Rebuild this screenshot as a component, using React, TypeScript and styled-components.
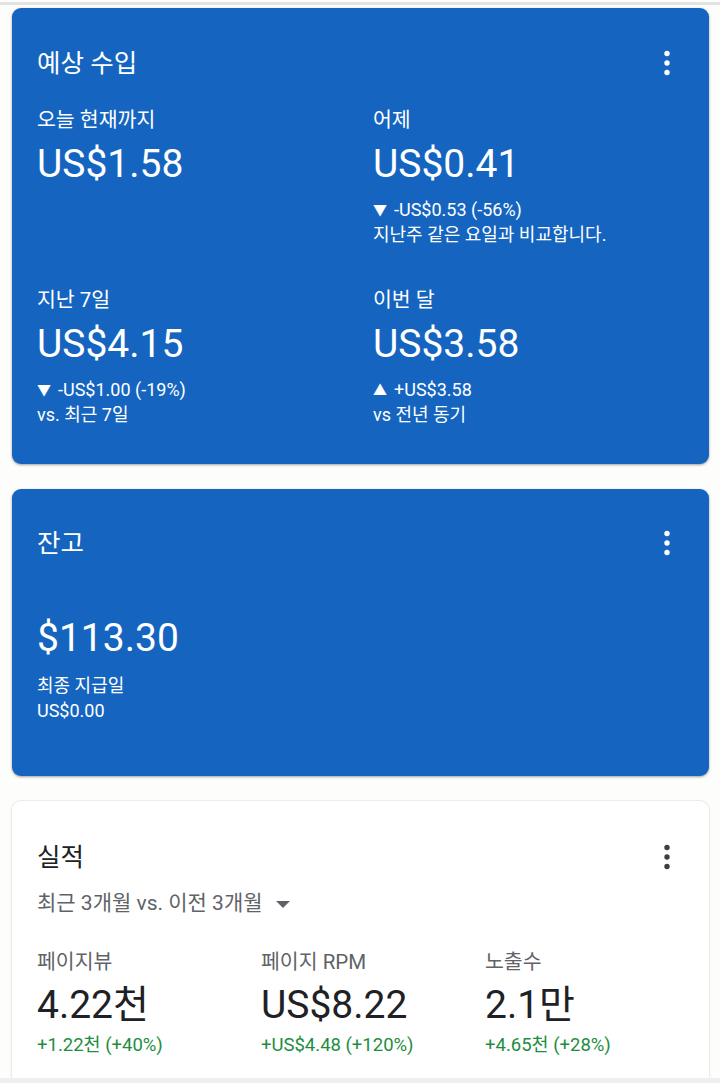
import React from "react";
import styled, { createGlobalStyle } from "styled-components";

const Global = createGlobalStyle`
  html, body { margin: 0; padding: 0; background: #fdfdfc; }
  body { font-family: Roboto, "Noto Sans CJK KR", sans-serif; -webkit-font-smoothing: antialiased; }
  * { box-sizing: border-box; }
`;

const Page = styled.div`
  display: flex;
  flex-direction: column;
  gap: 25px;
  padding: 0 11px 0 12px;
`;

const TopRule = styled.div`
  height: 3px;
  margin: 2px -11px -22px -12px;
  background: #e3e3e3;
`;

const BottomRule = styled.div`
  position: fixed;
  left: 0;
  right: 0;
  bottom: 0;
  height: 5px;
  background: #efefef;
`;

const Card = styled.section<{ $light?: boolean; $pad: string }>`
  border-radius: 9px;
  background: ${(p) => (p.$light ? "#ffffff" : "#1565c0")};
  color: ${(p) => (p.$light ? "#202124" : "#ffffff")};
  box-shadow: ${(p) =>
    p.$light
      ? "0 0 0 1px #ececec, 0 1px 3px rgba(0,0,0,0.12)"
      : "0 1px 3px rgba(0,0,0,0.28), 0 1px 2px rgba(0,0,0,0.12)"};
  padding: ${(p) => p.$pad};
`;

const Header = styled.div`
  display: flex;
  align-items: center;
  justify-content: space-between;
  height: 34px;
`;

const Title = styled.h2`
  margin: 0;
  font-size: 25.5px;
  font-weight: 400;
  line-height: 34px;
`;

const KebabButton = styled.button<{ $dark?: boolean }>`
  border: 0;
  background: none;
  padding: 0;
  margin-right: 12px;
  width: 10px;
  height: 26px;
  display: flex;
  align-items: center;
  justify-content: center;
  color: ${(p) => (p.$dark ? "#3c4043" : "#ffffff")};
`;

const Kebab = ({ dark }: { dark?: boolean }) => (
  <KebabButton $dark={dark} aria-label="more">
    <svg width="10" height="26" viewBox="0 0 10 26">
      <circle cx="5" cy="3.5" r="2.7" fill="currentColor" />
      <circle cx="5" cy="13" r="2.7" fill="currentColor" />
      <circle cx="5" cy="22.5" r="2.7" fill="currentColor" />
    </svg>
  </KebabButton>
);

const StatGrid = styled.div`
  display: grid;
  grid-template-columns: 336px 1fr;
  row-gap: 41px;
  margin-top: 28px;
`;

const Stat = styled.div`
  display: flex;
  flex-direction: column;
`;

const Label = styled.div<{ $muted?: boolean }>`
  font-size: 20.5px;
  line-height: 24px;
  color: ${(p) => (p.$muted ? "#5f6368" : "inherit")};
`;

const Value = styled.div`
  font-size: 39px;
  line-height: 48px;
  margin-top: 8px;
`;

const Note = styled.div<{ $gap?: number; $green?: boolean }>`
  font-size: ${(p) => (p.$green ? "18.5px" : "18px")};
  line-height: 25px;
  height: 25px;
  margin-top: ${(p) => p.$gap ?? 0}px;
  color: ${(p) => (p.$green ? "#1e8e3e" : "inherit")};
`;

const Arrow = styled.span`
  font-size: 14px;
  line-height: 1;
  margin-right: 7px;
  vertical-align: 1px;
`;

const BalanceValue = styled(Value)`
  margin-top: 54px;
`;

const BalanceBlock = styled.div`
  display: flex;
  flex-direction: column;
  padding-bottom: 14px;
`;

const RangePicker = styled.div`
  display: flex;
  align-items: center;
  gap: 13px;
  margin-top: 16px;
  font-size: 21px;
  line-height: 26px;
  color: #5f6368;
`;

const Caret = styled.span`
  width: 0;
  height: 0;
  border-left: 7px solid transparent;
  border-right: 7px solid transparent;
  border-top: 7px solid #5f6368;
  margin-top: 2px;
`;

const MetricRow = styled.div`
  display: grid;
  grid-template-columns: 224px 224px 1fr;
  margin-top: 34px;
`;

const MetricValue = styled(Value)`
  margin-top: 7px;
  color: #202124;
`;

export default function App() {
  return (
    <>
      <Global />
      <Page>
        <TopRule />
        <Card $pad="38px 25px 37px">
          <Header>
            <Title>예상 수입</Title>
            <Kebab />
          </Header>
          <StatGrid>
            <Stat>
              <Label>오늘 현재까지</Label>
              <Value>US$1.58</Value>
            </Stat>
            <Stat>
              <Label>어제</Label>
              <Value>US$0.41</Value>
              <Note $gap={9}>
                <Arrow>▼</Arrow>-US$0.53 (-56%)
              </Note>
              <Note>지난주 같은 요일과 비교합니다.</Note>
            </Stat>
            <Stat>
              <Label>지난 7일</Label>
              <Value>US$4.15</Value>
              <Note $gap={9}>
                <Arrow>▼</Arrow>-US$1.00 (-19%)
              </Note>
              <Note>vs. 최근 7일</Note>
            </Stat>
            <Stat>
              <Label>이번 달</Label>
              <Value>US$3.58</Value>
              <Note $gap={9}>
                <Arrow>▲</Arrow>+US$3.58
              </Note>
              <Note>vs 전년 동기</Note>
            </Stat>
          </StatGrid>
        </Card>

        <Card $pad="37px 25px 39px">
          <Header>
            <Title>잔고</Title>
            <Kebab />
          </Header>
          <BalanceBlock>
            <BalanceValue>$113.30</BalanceValue>
            <Note $gap={11}>최종 지급일</Note>
            <Note>US$0.00</Note>
          </BalanceBlock>
        </Card>

        <Card $light $pad="39px 25px 60px">
          <Header>
            <Title>실적</Title>
            <Kebab dark />
          </Header>
          <RangePicker>
            최근 3개월 vs. 이전 3개월
            <Caret />
          </RangePicker>
          <MetricRow>
            <Stat>
              <Label $muted>페이지뷰</Label>
              <MetricValue>4.22천</MetricValue>
              <Note $gap={4} $green>+1.22천 (+40%)</Note>
            </Stat>
            <Stat>
              <Label $muted>페이지 RPM</Label>
              <MetricValue>US$8.22</MetricValue>
              <Note $gap={4} $green>+US$4.48 (+120%)</Note>
            </Stat>
            <Stat>
              <Label $muted>노출수</Label>
              <MetricValue>2.1만</MetricValue>
              <Note $gap={4} $green>+4.65천 (+28%)</Note>
            </Stat>
          </MetricRow>
        </Card>
      </Page>
      <BottomRule />
    </>
  );
}
